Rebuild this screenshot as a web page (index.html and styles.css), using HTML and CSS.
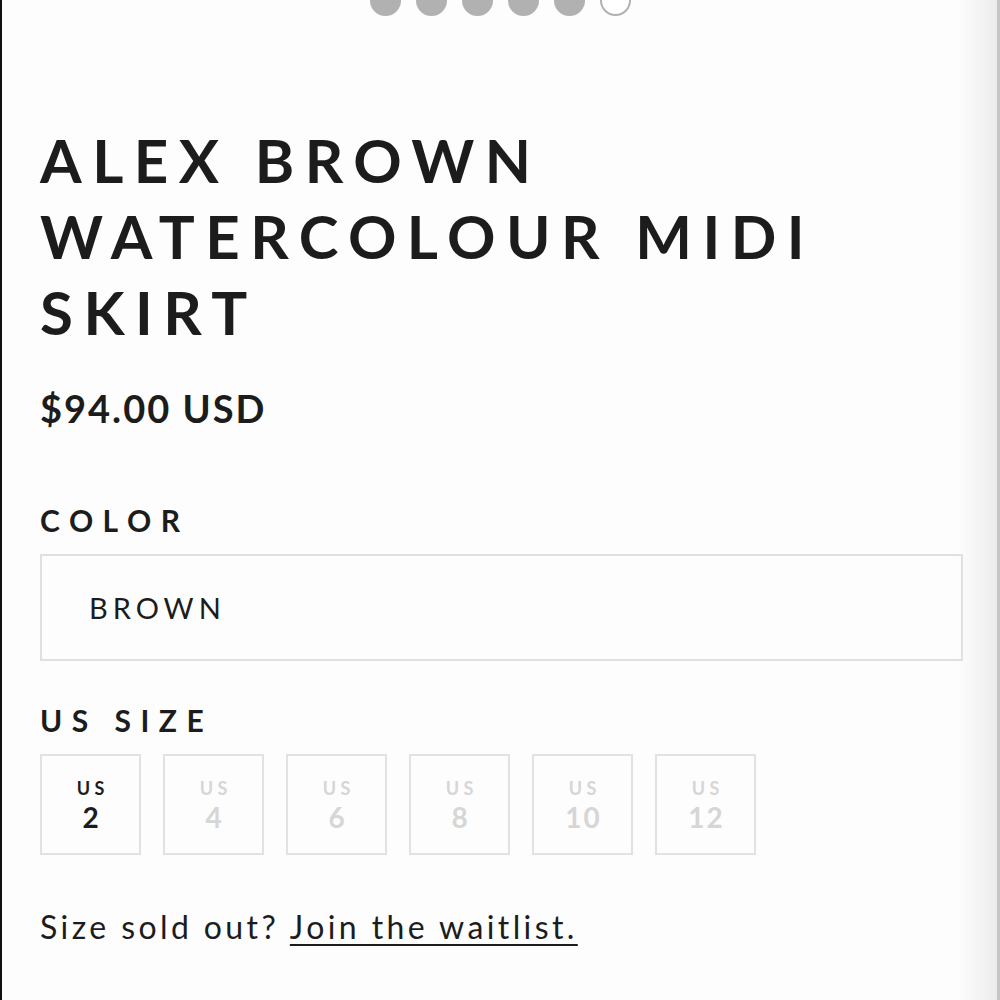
FILE: index.html
```html
<!DOCTYPE html>
<html lang="en">
<head>
<meta charset="utf-8">
<title>Alex Brown Watercolour Midi Skirt</title>
<link rel="stylesheet" href="styles.css">
</head>
<body>
<div class="page">
  <div class="dots">
    <span class="dot"></span>
    <span class="dot"></span>
    <span class="dot"></span>
    <span class="dot"></span>
    <span class="dot"></span>
    <span class="dot dot-current"></span>
  </div>
  <div class="content">
    <h1 class="title">ALEX BROWN<br>WATERCOLOUR MIDI<br>SKIRT</h1>
    <p class="price">$94.00 USD</p>
    <div class="label label-color">COLOR</div>
    <div class="select">BROWN</div>
    <div class="label label-size">US SIZE</div>
    <div class="sizes">
      <div class="size size-on"><span class="size-us">US</span><span class="size-num">2</span></div>
      <div class="size"><span class="size-us">US</span><span class="size-num">4</span></div>
      <div class="size"><span class="size-us">US</span><span class="size-num">6</span></div>
      <div class="size"><span class="size-us">US</span><span class="size-num">8</span></div>
      <div class="size"><span class="size-us">US</span><span class="size-num">10</span></div>
      <div class="size"><span class="size-us">US</span><span class="size-num">12</span></div>
    </div>
    <p class="waitlist">Size sold out? <a class="waitlist-link" href="#">Join the waitlist.</a></p>
  </div>
</div>
</body>
</html>
```

FILE: styles.css
```css
html, body {
  margin: 0;
  padding: 0;
}
body {
  font-family: "Lato", "Liberation Sans", sans-serif;
  color: #1c1c1c;
  background: #fdfdfd;
}
.page {
  box-sizing: border-box;
  height: 1000px;
  overflow: hidden;
  border-left: 2px solid #111;
  background: linear-gradient(to right, #fdfdfd 0, #fdfdfd 955px, #ececec 995px, #c6c6c6 995px, #c6c6c6 998px);
}
.dots {
  display: flex;
  justify-content: center;
  gap: 15px;
  margin-top: -15px;
  margin-right: 2px;
}
.dot {
  box-sizing: border-box;
  width: 31px;
  height: 31px;
  border-radius: 50%;
  background: #b1b1b1;
}
.dot-current {
  background: #fff;
  border: 2px solid #b1b1b1;
}
.content {
  padding: 0 37px 0 38px;
}
.title {
  margin: 106px 0 0;
  font-size: 60px;
  line-height: 76px;
  font-weight: 700;
  letter-spacing: 10.5px;
}
.price {
  margin: 38px 0 0;
  font-size: 38px;
  line-height: 40px;
  font-weight: 700;
  letter-spacing: 2px;
}
.label {
  font-size: 30px;
  line-height: 30px;
  font-weight: 700;
  letter-spacing: 9.5px;
}
.label-color {
  margin-top: 77px;
}
.label-size {
  margin-top: 44px;
}
.select {
  box-sizing: border-box;
  margin-top: 19px;
  height: 107px;
  border: 2px solid #e0e0e0;
  display: flex;
  align-items: center;
  padding-left: 47px;
  font-size: 29px;
  letter-spacing: 5px;
}
.sizes {
  display: flex;
  gap: 22px;
  margin-top: 19px;
}
.size {
  box-sizing: border-box;
  width: 101px;
  height: 101px;
  border: 2px solid #e2e2e2;
  display: flex;
  flex-direction: column;
  align-items: center;
  justify-content: center;
  gap: 7px;
  color: #d6d6d6;
  font-weight: 700;
}
.size-on {
  color: #1c1c1c;
}
.size-us {
  font-size: 18px;
  line-height: 18px;
  letter-spacing: 4.5px;
  margin-right: -4.5px;
}
.size-num {
  font-size: 28px;
  line-height: 27px;
  letter-spacing: 2px;
  margin-right: -2px;
}
.waitlist {
  margin: 52px 0 0;
  font-size: 32px;
  line-height: 40px;
  letter-spacing: 3.4px;
}
.waitlist-link {
  color: inherit;
  text-decoration: underline;
  text-decoration-thickness: 2px;
  text-underline-offset: 5px;
}
```
